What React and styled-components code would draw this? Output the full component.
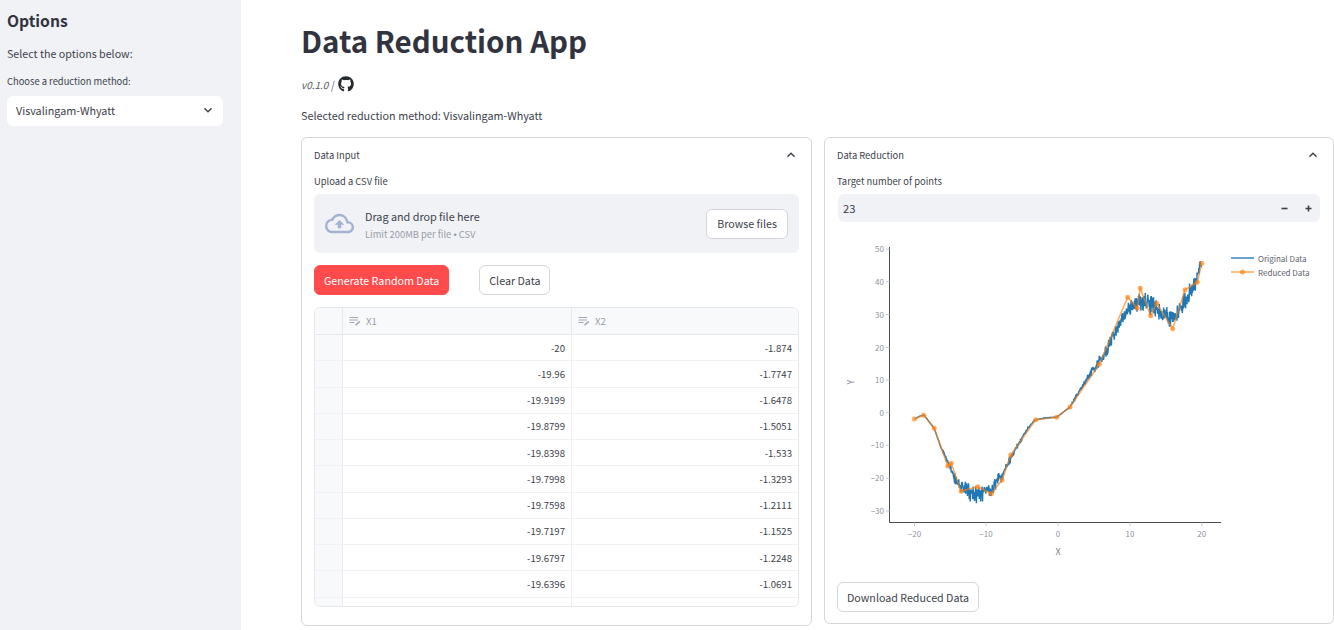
import React from 'react';
import styled, { createGlobalStyle } from 'styled-components';
import { FaGithub } from 'react-icons/fa';
import { MdOutlineCloudUpload, MdExpandLess, MdExpandMore } from 'react-icons/md';

const GlobalStyle = createGlobalStyle`
  html, body {
    margin: 0;
    padding: 0;
    height: 100%;
    overflow: hidden;
    background: #ffffff;
  }
  body {
    font-family: "Noto Sans CJK SC", "Noto Sans", sans-serif;
    color: #3d3f4b;
  }
  * { box-sizing: border-box; }
`;

const AppContainer = styled.div`
  display: flex;
  width: 1334px;
  height: 630px;
  overflow: hidden;
`;

const Sidebar = styled.aside`
  width: 241px;
  flex: none;
  background: #f0f2f6;
  padding: 9px 18px 0 7px;
`;

const SidebarTitle = styled.h3`
  margin: 0;
  font-size: 15.7px;
  line-height: 24px;
  font-weight: 600;
  color: #31333f;
`;

const SidebarText = styled.p`
  margin: 12px 0 0;
  font-size: 10.7px;
  line-height: 18px;
`;

const SidebarLabel = styled.label`
  display: block;
  margin-top: 10px;
  font-size: 9.4px;
  line-height: 16px;
`;

const SelectBox = styled.div`
  margin-top: 7px;
  height: 30px;
  background: #ffffff;
  border-radius: 6px;
  display: flex;
  align-items: center;
  justify-content: space-between;
  padding: 0 7px 2px 9px;
  font-size: 10.8px;
`;

const Main = styled.main`
  flex: 1;
  min-width: 0;
  padding: 0 0 0 60px;
`;

const Title = styled.h1`
  margin: 18px 0 0;
  font-size: 29.5px;
  line-height: 44px;
  font-weight: 700;
  color: #31333f;
`;

const VersionRow = styled.div`
  display: flex;
  align-items: center;
  gap: 5px;
  margin-top: 13px;
  height: 18px;
  font-size: 10px;
  font-style: italic;
  color: #555763;
`;

const Selected = styled.p`
  margin: 13px 0 0;
  font-size: 10.8px;
  line-height: 18px;
`;

const Columns = styled.div`
  display: grid;
  grid-template-columns: 511px 510px;
  gap: 12px;
  margin-top: 13px;
  align-items: start;
`;

const Card = styled.section`
  height: ${(p) => p.$height}px;
  border: 1px solid #d6d6d8;
  border-radius: 6px;
  padding: 0 12px;
`;

const CardHeader = styled.div`
  display: flex;
  align-items: center;
  justify-content: space-between;
  height: 33px;
  font-size: 9.4px;
`;

const FieldLabel = styled.div`
  margin-top: 1px;
  font-size: 9.4px;
  line-height: 18px;
`;

const Dropzone = styled.div`
  margin-top: 4px;
  height: 59px;
  background: #f0f2f6;
  border-radius: 6px;
  display: flex;
  align-items: center;
  padding: 0 11px;
  color: #a3b2d0;
`;

const DropText = styled.div`
  flex: 1;
  margin: 3px 0 0 11px;
  display: flex;
  flex-direction: column;
`;

const DropTitle = styled.span`
  color: #3d3f4b;
  font-size: 10.8px;
  line-height: 18px;
`;

const DropHint = styled.span`
  color: #9a9da8;
  font-size: 9.4px;
  line-height: 18px;
`;

const Bullet = styled.span`
  font-family: "Liberation Sans", sans-serif;
`;

const Button = styled.button`
  height: 30px;
  padding: 0 ${(p) => p.$pad || 9}px;
  border-radius: 6px;
  border: 1px solid ${(p) => (p.$primary ? '#ff4b4b' : '#d5d6da')};
  background: ${(p) => (p.$primary ? '#ff4b4b' : '#ffffff')};
  color: ${(p) => (p.$primary ? '#ffffff' : '#3d3f4b')};
  font-family: inherit;
  font-size: 10.7px;
  white-space: nowrap;
`;

const ButtonRow = styled.div`
  display: flex;
  gap: 30px;
  margin-top: 12px;
`;

const Table = styled.div`
  margin-top: 12px;
  width: 485px;
  height: 300px;
  border: 1px solid #e7e8ec;
  border-radius: 6px;
  overflow: hidden;
`;

const TableRow = styled.div`
  display: grid;
  grid-template-columns: 28px 229px 1fr;
  height: ${(p) => (p.$head ? 27 : 26.27)}px;
  border-bottom: 1px solid ${(p) => (p.$head ? '#e7e8ec' : '#f0f1f4')};
`;

const IndexCell = styled.div`
  background: #f8f9fb;
  border-right: 1px solid #e7e8ec;
`;

const HeadCell = styled.div`
  background: #f8f9fb;
  border-right: 1px solid #e7e8ec;
  display: flex;
  align-items: center;
  gap: 5px;
  padding-left: 6px;
  color: #9a9da8;
  font-size: 9.6px;
  &:last-child { border-right: none; }
`;

const Cell = styled.div`
  border-right: 1px solid #f0f1f4;
  display: flex;
  align-items: center;
  justify-content: flex-end;
  padding-right: 6px;
  font-size: 9.6px;
  &:last-child { border-right: none; }
`;

const NumberInput = styled.div`
  margin: 4px 1px 0;
  height: 28px;
  background: #f0f2f6;
  border-radius: 6px;
  display: flex;
  align-items: center;
  padding: 0 8px 0 5px;
  font-size: 11.2px;
`;

const NumberValue = styled.span`
  flex: 1;
`;

const StepButtons = styled.div`
  display: flex;
  gap: 17px;
  align-items: center;
  color: #3d3f4b;
`;

const ChartSvg = styled.svg`
  display: block;
  width: 483px;
  height: 340px;
  margin: 14px 0 6px;
`;

const TickLabel = styled.text`
  font-size: 8px;
  fill: #8f929d;
`;

const AxisLabel = styled.text`
  font-size: 9px;
  fill: #7d808b;
`;

const LegendLabel = styled.text`
  font-size: 8px;
  fill: #5c5f6b;
`;

const rows = [
  ['-20', '-1.874'],
  ['-19.96', '-1.7747'],
  ['-19.9199', '-1.6478'],
  ['-19.8799', '-1.5051'],
  ['-19.8398', '-1.533'],
  ['-19.7998', '-1.3293'],
  ['-19.7598', '-1.2111'],
  ['-19.7197', '-1.1525'],
  ['-19.6797', '-1.2248'],
  ['-19.6396', '-1.0691'],
];

// page coordinates of the reduced points, read off the plot
const reduced = [
  [914.3, 419], [923.7, 415.3], [934.3, 428.3], [947.7, 466], [951.3, 463.3], [961, 491.3],
  [977.7, 486.7], [991.3, 493.7], [1002, 480], [1010.7, 455], [1035.7, 419.7], [1056.7, 417.3],
  [1070, 407], [1099.3, 364.3], [1127.7, 297.3], [1137.3, 308.3], [1140.3, 288.3], [1150.7, 315.7],
  [1156.7, 303.3], [1172.7, 328.7], [1185, 289.7], [1197.3, 282.3], [1201.7, 263.3],
];

const baseCurve = [
  [914, 419], [920, 416], [924, 415], [934, 428], [942, 450], [950, 466], [955, 480], [962, 489],
  [970, 492], [977, 494], [985, 492], [993, 488], [1003, 474], [1013, 453], [1020, 441], [1028, 428],
  [1035, 420], [1045, 418], [1057, 417], [1070, 407], [1080, 390], [1093, 370], [1107, 349], [1118, 326],
  [1126, 311], [1133, 304], [1147, 302], [1155, 309], [1163, 316], [1173, 318], [1182, 306], [1190, 293],
  [1196, 281], [1201, 264],
];

const noiseStops = [
  [914, 0], [938, 0.3], [945, 2.5], [955, 8], [977, 11], [993, 9], [1003, 7], [1013, 5], [1022, 2.5], [1030, 1],
  [1038, 0.3], [1068, 0.4], [1080, 2.5], [1093, 6], [1107, 7], [1125, 8], [1133, 9], [1147, 13], [1163, 12],
  [1173, 11], [1190, 11], [1201, 9],
];

function interp(table, x) {
  for (let i = 1; i < table.length; i++) {
    if (x <= table[i][0]) {
      const [x0, y0] = table[i - 1];
      const [x1, y1] = table[i];
      return y0 + ((y1 - y0) * (x - x0)) / (x1 - x0);
    }
  }
  return table[table.length - 1][1];
}

function buildOriginal() {
  let seed = 12345;
  const rand = () => {
    seed = (seed * 16807) % 2147483647;
    return seed / 2147483647 - 0.5;
  };
  const pts = [];
  for (let x = 914.5; x <= 1201.5; x += 0.36) {
    const spread = rand() + rand();
    const y = interp(baseCurve, x) + spread * interp(noiseStops, x);
    pts.push(`${x.toFixed(2)},${y.toFixed(2)}`);
  }
  return pts.join(' ');
}

const originalLine = buildOriginal();
const reducedLine = reduced.map((p) => p.join(',')).join(' ');

const xTicks = [[-20, 914.5], [-10, 986], [0, 1058], [10, 1130], [20, 1201.7]];
const yTicks = [[50, 249], [40, 281.7], [30, 314.5], [20, 347.5], [10, 380], [0, 412.7], [-10, 445.3], [-20, 478.3], [-30, 511]];

const formatTick = (v) => (v < 0 ? `\u2212${-v}` : `${v}`);

function Chart() {
  return (
    <ChartSvg viewBox="837 236 483 340">
      <path d="M889.5 247V522.5H1221" fill="none" stroke="#4a4c55" strokeWidth="1" />
      {xTicks.map(([v, x]) => (
        <g key={v}>
          <line x1={x} x2={x} y1={522.5} y2={526} stroke="#c6c8ce" />
          <TickLabel x={x} y={537} textAnchor="middle">{formatTick(v)}</TickLabel>
        </g>
      ))}
      {yTicks.map(([v, y]) => (
        <g key={v}>
          <line x1={886} x2={889.5} y1={y} y2={y} stroke="#c6c8ce" />
          <TickLabel x={884} y={y + 3} textAnchor="end">{formatTick(v)}</TickLabel>
        </g>
      ))}
      <AxisLabel x={1058} y={555} textAnchor="middle">X</AxisLabel>
      <AxisLabel x={854} y={382} textAnchor="middle" transform="rotate(-90 854 382)">Y</AxisLabel>
      <polyline points={originalLine} fill="none" stroke="#1f77b4" strokeWidth="1.4" />
      <polyline points={reducedLine} fill="none" stroke="#ff7f0e" strokeOpacity="0.65" strokeWidth="1.6" />
      {reduced.map(([x, y]) => (
        <circle key={x} cx={x} cy={y} r="2.5" fill="#ff7f0e" fillOpacity="0.65" />
      ))}
      <line x1={1231} x2={1254} y1={258} y2={258} stroke="#1f77b4" strokeOpacity="0.85" strokeWidth="1.6" />
      <LegendLabel x={1258} y={261.5}>Original Data</LegendLabel>
      <line x1={1231} x2={1254} y1={272} y2={272} stroke="#ff7f0e" strokeOpacity="0.65" strokeWidth="1.6" />
      <circle cx={1242.5} cy={272} r="2.5" fill="#ff7f0e" fillOpacity="0.65" />
      <LegendLabel x={1258} y={275.5}>Reduced Data</LegendLabel>
    </ChartSvg>
  );
}

function ColumnIcon() {
  return (
    <svg width="12" height="10" viewBox="0 0 12 10" fill="none" stroke="#a3a6b0" strokeWidth="1">
      <path d="M0.5 1.5H9M0.5 4H9M0.5 6.5H5.5" />
      <path d="M6.5 9.2L10.8 5.4" strokeWidth="1.5" />
    </svg>
  );
}

function MinusIcon() {
  return (
    <svg width="7" height="7" viewBox="0 0 7 7" stroke="currentColor" strokeWidth="1.6">
      <path d="M0.5 3.5H6.5" />
    </svg>
  );
}

function PlusIcon() {
  return (
    <svg width="7" height="7" viewBox="0 0 7 7" stroke="currentColor" strokeWidth="1.6">
      <path d="M0.5 3.5H6.5M3.5 0.5V6.5" />
    </svg>
  );
}

export default function App() {
  return (
    <AppContainer>
      <GlobalStyle />
      <Sidebar>
        <SidebarTitle>Options</SidebarTitle>
        <SidebarText>Select the options below:</SidebarText>
        <SidebarLabel>Choose a reduction method:</SidebarLabel>
        <SelectBox>
          Visvalingam-Whyatt
          <MdExpandMore size={16} />
        </SelectBox>
      </Sidebar>
      <Main>
        <Title>Data Reduction App</Title>
        <VersionRow>
          v0.1.0 | <FaGithub size={16} color="#24292f" />
        </VersionRow>
        <Selected>Selected reduction method: Visvalingam-Whyatt</Selected>
        <Columns>
          <Card $height={489}>
            <CardHeader>
              Data Input
              <MdExpandLess size={16} />
            </CardHeader>
            <FieldLabel>Upload a CSV file</FieldLabel>
            <Dropzone>
              <MdOutlineCloudUpload size={29} />
              <DropText>
                <DropTitle>Drag and drop file here</DropTitle>
                <DropHint>Limit 200MB per file <Bullet>•</Bullet> CSV</DropHint>
              </DropText>
              <Button $pad={10}>Browse files</Button>
            </Dropzone>
            <ButtonRow>
              <Button $primary>Generate Random Data</Button>
              <Button>Clear Data</Button>
            </ButtonRow>
            <Table>
              <TableRow $head>
                <IndexCell />
                <HeadCell><ColumnIcon />X1</HeadCell>
                <HeadCell><ColumnIcon />X2</HeadCell>
              </TableRow>
              {rows.map(([a, b]) => (
                <TableRow key={a}>
                  <IndexCell />
                  <Cell>{a}</Cell>
                  <Cell>{b}</Cell>
                </TableRow>
              ))}
              <TableRow>
                <IndexCell />
                <Cell />
                <Cell />
              </TableRow>
            </Table>
          </Card>
          <Card $height={487}>
            <CardHeader>
              Data Reduction
              <MdExpandLess size={16} />
            </CardHeader>
            <FieldLabel>Target number of points</FieldLabel>
            <NumberInput>
              <NumberValue>23</NumberValue>
              <StepButtons>
                <MinusIcon />
                <PlusIcon />
              </StepButtons>
            </NumberInput>
            <Chart />
            <Button>Download Reduced Data</Button>
          </Card>
        </Columns>
      </Main>
    </AppContainer>
  );
}
